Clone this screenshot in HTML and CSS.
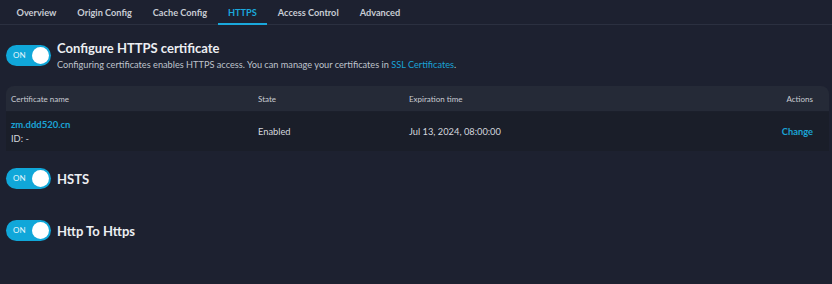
FILE: index.html
```html
<!DOCTYPE html>
<html lang="en">
<head>
  <meta charset="UTF-8" />
  <title>HTTPS</title>
  <link rel="stylesheet" href="styles.css">
</head>
<body>
  <div class="tabs">
    <span class="tab">Overview</span>
    <span class="tab">Origin Config</span>
    <span class="tab">Cache Config</span>
    <span class="tab active">HTTPS</span>
    <span class="tab">Access Control</span>
    <span class="tab">Advanced</span>
  </div>

  <div class="section">
    <div class="section-head">
      <span class="switch"><span class="switch-text">ON</span><span class="knob"></span></span>
      <div>
        <div class="section-title">Configure HTTPS certificate</div>
        <div class="section-desc">Configuring certificates enables HTTPS access. You can manage your certificates in <a href="#">SSL Certificates</a>.</div>
      </div>
    </div>

    <table class="cert-table">
      <thead>
        <tr>
          <th class="col-name">Certificate name</th>
          <th class="col-state">State</th>
          <th class="col-exp">Expiration time</th>
          <th class="col-actions">Actions</th>
        </tr>
      </thead>
      <tbody>
        <tr>
          <td>
            <a href="#" class="cert-link">zm.ddd520.cn</a>
            <div class="cert-id">ID: -</div>
          </td>
          <td>Enabled</td>
          <td>Jul 13, 2024, 08:00:00</td>
          <td class="col-actions"><a href="#" class="action">Change</a></td>
        </tr>
      </tbody>
    </table>
  </div>

  <div class="section option">
    <span class="switch"><span class="switch-text">ON</span><span class="knob"></span></span>
    <span class="section-title">HSTS</span>
  </div>

  <div class="section option">
    <span class="switch"><span class="switch-text">ON</span><span class="knob"></span></span>
    <span class="section-title">Http To Https</span>
  </div>
</body>
</html>
```

FILE: styles.css
```css
body {
  margin: 0;
  background: #1d2130;
  font-family: Lato, "Liberation Sans", sans-serif;
  color: #d4d7de;
}

a {
  color: #1aa3d6;
  text-decoration: none;
}

.tabs {
  display: flex;
  padding-left: 6px;
  border-bottom: 1px solid #2b3040;
  box-sizing: border-box;
  height: 25px;
}

.tab {
  padding: 0 10.5px;
  font-size: 9.2px;
  font-weight: 700;
  line-height: 26px;
  color: #c8ccd4;
  border-bottom: 2px solid transparent;
  margin-bottom: -1px;
}

.tab.active {
  color: #1aa8dc;
  border-bottom-color: #1aa8dc;
}

.section {
  padding: 0 3px 0 6px;
}

.section-head {
  display: flex;
  align-items: flex-start;
  gap: 6px;
  padding-top: 14px;
}

.switch {
  position: relative;
  display: inline-block;
  flex: none;
  width: 45px;
  height: 21px;
  border-radius: 11px;
  background: #10a7d9;
  margin-top: 6px;
}

.switch-text {
  position: absolute;
  left: 7px;
  top: 0;
  line-height: 21px;
  font-size: 8px;
  color: #e6f6fc;
}

.knob {
  position: absolute;
  right: 2px;
  top: 2px;
  width: 17px;
  height: 17px;
  border-radius: 50%;
  background: #fff;
}

.section-title {
  font-size: 13px;
  font-weight: 700;
  color: #eceef2;
  line-height: 16px;
  margin-top: 1px;
}

.section-desc {
  font-size: 9.2px;
  color: #bfc3cc;
  margin-top: 3px;
}

.cert-table {
  width: 100%;
  margin-top: 16px;
  border-collapse: separate;
  border-spacing: 0;
  font-size: 8px;
}

.cert-table th {
  background: #252a37;
  color: #c9ccd3;
  font-weight: 400;
  text-align: left;
  height: 25px;
  padding: 0 5px;
  border-bottom: 1px solid #1b1f2b;
}

.cert-table th:first-child {
  border-top-left-radius: 8px;
}

.cert-table th:last-child {
  border-top-right-radius: 8px;
}

.cert-table td {
  background: #1a1e29;
  color: #d4d7de;
  font-size: 9.3px;
  height: 39px;
  padding: 0 5px;
}

.col-name { width: 237px; }
.col-state { width: 141px; }

.cert-table .col-actions {
  text-align: right;
  padding-right: 16px;
}

.cert-link {
  font-weight: 700;
  font-size: 9.5px;
  display: block;
}

.cert-id {
  margin-top: 3px;
}

.action {
  font-weight: 700;
}

.option {
  display: flex;
  align-items: center;
  gap: 6px;
  margin-top: 17px;
}

.option + .option {
  margin-top: 31px;
}

.option .switch {
  margin-top: 0;
}

.option .section-title {
  font-size: 13px;
  margin-top: 0;
}
```
